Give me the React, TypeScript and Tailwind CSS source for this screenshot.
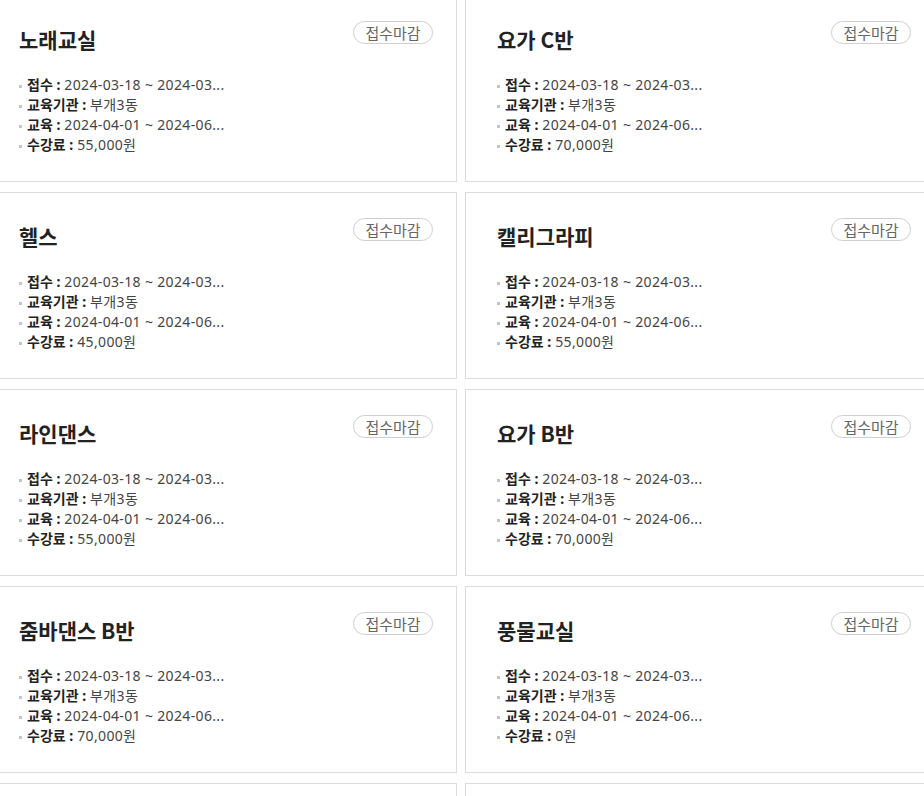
type Course = {
  title: string
  fee: string
}

const courses: Course[] = [
  { title: '노래교실', fee: '55,000원' },
  { title: '요가 C반', fee: '70,000원' },
  { title: '헬스', fee: '45,000원' },
  { title: '캘리그라피', fee: '55,000원' },
  { title: '라인댄스', fee: '55,000원' },
  { title: '요가 B반', fee: '70,000원' },
  { title: '줌바댄스 B반', fee: '70,000원' },
  { title: '풍물교실', fee: '0원' },
  { title: '필라테스', fee: '60,000원' },
  { title: '생활영어', fee: '30,000원' },
]

function InfoRow({ label, value }: { label: string; value: string }) {
  return (
    <li className="flex items-center h-[20px] whitespace-nowrap">
      <span className="w-[3px] h-[3px] bg-[#c4c4c4] mr-[5px] mt-[4px] shrink-0" />
      <b className="font-bold text-[#222]">{label} :</b>
      <span className="ml-[4px] text-[#444] tracking-[0.35px]">{value}</span>
    </li>
  )
}

function CourseCard({ course }: { course: Course }) {
  return (
    <div className="h-[187px] border border-[#dcdcdc] bg-white pl-[31px] pr-[23px] pt-[25px]">
      <div className="flex items-start justify-between">
        <h3 className="mt-[3px] text-[21px] leading-[30px] font-bold text-[#222]">
          {course.title}
        </h3>
        <span className="w-[80px] h-[23px] rounded-full border border-[#cfcfcf] text-[15px] leading-[21px] text-center text-[#666]">
          접수마감
        </span>
      </div>
      {/* 접수 / 기관 / 교육기간 / 수강료 */}
      <ul
        className="mt-[20px] text-[14px]"
        style={{ fontFamily: '"Noto Sans", "Noto Sans CJK KR", sans-serif' }}
      >
        <InfoRow label="접수" value="2024-03-18 ~ 2024-03..." />
        <InfoRow label="교육기관" value="부개3동" />
        <InfoRow label="교육" value="2024-04-01 ~ 2024-06..." />
        <InfoRow label="수강료" value={course.fee} />
      </ul>
    </div>
  )
}

export default function App() {
  return (
    <div
      className="h-[796px] overflow-hidden bg-white"
      style={{ fontFamily: '"Noto Sans CJK KR", "Noto Sans", sans-serif' }}
    >
      <div className="-ml-[13px] -mt-[5px] grid grid-cols-[470px_470px] gap-x-[8px] gap-y-[10px]">
        {courses.map((c, i) => (
          <CourseCard key={i} course={c} />
        ))}
      </div>
    </div>
  )
}
